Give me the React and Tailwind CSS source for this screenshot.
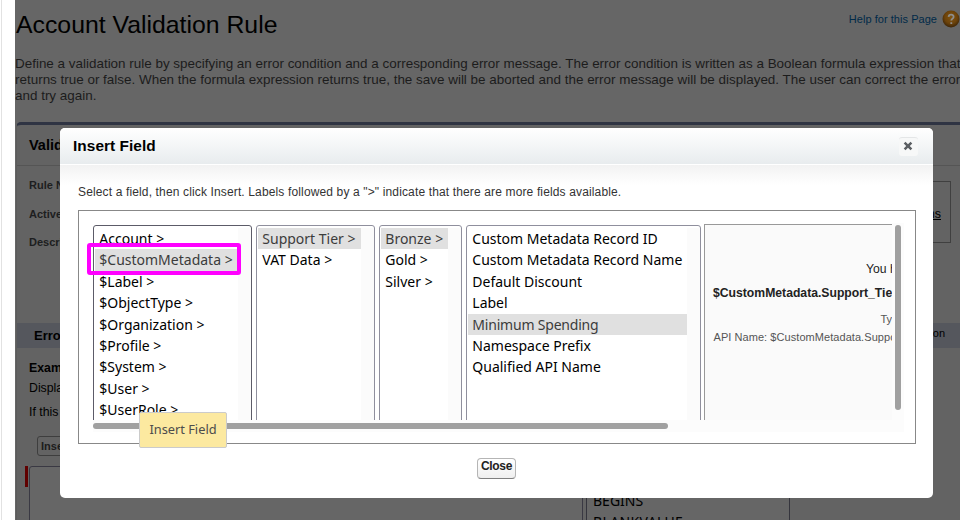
const cx = (...parts) => parts.filter(Boolean).join(' ')

const globals = ['Account >', '$CustomMetadata >', '$Label >', '$ObjectType >', '$Organization >', '$Profile >', '$System >', '$User >', '$UserRole >']
const types = ['Support Tier >', 'VAT Data >']
const records = ['Bronze >', 'Gold >', 'Silver >']
const fields = ['Custom Metadata Record ID', 'Custom Metadata Record Name', 'Default Discount', 'Label', 'Minimum Spending', 'Namespace Prefix', 'Qualified API Name']

function ListBox({ items, selected, className, gutter, border = 'border-[#8f8f9d]' }) {
  return (
    <div className={cx('flex h-[240px] shrink-0 rounded-[3px] border bg-white pt-[2px] pl-px', border, className)}>
      <ul className="grow font-['Noto_Sans',sans-serif] text-[14px] text-black">
        {items.map((item) => (
          <li
            key={item}
            className={cx('h-[21.4px] pl-[4.8px] leading-[21px] whitespace-nowrap', item === selected && 'bg-[#e0e0e0] text-[#3c3c3c]', item === 'Minimum Spending' && 'tracking-[-0.2px]')}
          >
            {item}
          </li>
        ))}
      </ul>
      <div className={cx('shrink-0 bg-[#fbfbfb]', gutter)} />
    </div>
  )
}

function RulePage() {
  return (
    <div className="ml-[15px] h-[520px] w-[945px] overflow-hidden bg-[#666666]">
      <div className="flex h-[56px] justify-between">
        <h1 className="pt-[10px] pl-[1px] text-[24.8px] leading-[30px] text-black">Account Validation Rule</h1>
        <div className="flex h-[37px] items-center gap-[5px] pt-px">
          <span className="text-[11px] tracking-[0.04px] whitespace-nowrap text-[#012a49]">Help for this Page</span>
          <svg className="size-[18px]" viewBox="0 0 18 18">
            <defs>
              <radialGradient id="help" cx="0.5" cy="0.4" r="0.6">
                <stop offset="0" stopColor="#7e5412" />
                <stop offset="0.6" stopColor="#6d430a" />
                <stop offset="1" stopColor="#3c2508" />
              </radialGradient>
            </defs>
            <circle cx="9" cy="9" r="8.5" fill="url(#help)" />
            <path d="M6.6 6.9c.2-3 5.2-2.9 5 .1-.1 1.6-2.3 1.7-2.3 3.6M9.3 12.3v1.7" fill="none" stroke="#8d8d8d" strokeWidth="1.8" />
          </svg>
        </div>
      </div>
      <p className="h-[66px] text-[13.45px] leading-4 whitespace-nowrap text-[#1c1c1c]">
        Define a validation rule by specifying an error condition and a corresponding error message. The error condition is written as a Boolean formula expression that
        <br />
        returns true or false. When the formula expression returns true, the save will be aborted and the error message will be displayed. The user can correct the error
        <br />
        and try again.
      </p>
      <div className="ml-px h-[500px] w-[960px] rounded-tl-[5px] border-t-[3px] border-l border-t-[#2f3443] border-l-[#5c5c5c] bg-[#636363]">
        <div className="h-[41px] border-b border-[#555555] pt-[10px] pl-3 text-[14.5px] leading-[20px] font-bold text-black">Validation</div>
        <div className="flex h-[157px] justify-between">
          <div className="pt-[9px] pl-3 text-[11px] font-bold text-[#1d1e20]">
            <div className="h-[29px] leading-[20px]">Rule Name</div>
            <div className="h-[28px] leading-[20px]">Active</div>
            <div className="leading-[20px]">Description</div>
          </div>
          <div className="mt-[15px] mr-[25px] flex h-[62px] w-[200px] justify-end border border-[#404040] pt-[22px] pr-[9px] text-[12.5px] leading-[20px] text-black underline">
            Functions
          </div>
        </div>
        <div className="flex h-[25px] items-center justify-between bg-[#55575d] pr-[31px] pl-[17px] text-black">
          <span className="text-[13px] font-bold">Error</span>
          <span className="pb-[4px] text-[11px]">Information</span>
        </div>
        <div className="pt-[10px] pl-3 text-[12.3px] leading-[20px] text-black">
          <div className="h-[20px] font-bold">Example:</div>
          <div className="h-[24px]">Display</div>
          <div className="h-[34px]">If this</div>
        </div>
        <div className="ml-[20px] h-[20px] w-[80px] rounded-[3px] border border-[#3e3e3e] pl-[3px] text-[11px] leading-[19px] font-bold text-[#1c1c1c]">Insert</div>
        <div className="mt-[10px] ml-[8px] flex h-[80px]">
          <div className="h-[21px] w-[3px] bg-[#600000]" />
          <div className="ml-px w-[554px] rounded-[3px] border border-[#3a3943] bg-[#666666]" />
          <div className="ml-[3px] w-[204px] border border-[#35353d] bg-[#666666] pt-[23px] pl-[6px] font-['Noto_Sans',sans-serif] text-[14px] leading-[21px] text-black">
            <div>BEGINS</div>
            <div className="tracking-[0.35px]">BLANKVALUE</div>
          </div>
        </div>
      </div>
    </div>
  )
}

function FieldDialog() {
  return (
    <section className="absolute top-[128px] left-[60px] h-[370px] w-[873px] overflow-hidden rounded-[5px] bg-white">
      <header className="flex h-[36px] items-center justify-between bg-linear-to-b from-white to-[#e8ecee] pr-[15px] pl-[13px]">
        <h2 className="text-[15.4px] leading-[20px] font-bold tracking-[0.05px] text-black">Insert Field</h2>
        <button className="flex size-[19px] items-center justify-center rounded-[3px] border-t border-[#e4e6e7] bg-[#f7f8f8] pr-px pb-px">
          <svg className="size-[10px]" viewBox="0 0 10 10">
            <path d="M1.6 1.6l6.8 6.8M8.4 1.6L1.6 8.4" stroke="#5c6064" strokeWidth="2.5" />
          </svg>
        </button>
      </header>
      <div className="mt-px h-[20px] bg-linear-to-b from-[#f2f2f2] to-white" />
      <div className="flex flex-col items-center">
        <p className="h-[25px] w-[837px] text-[12px] leading-[15px] tracking-[0.14px] whitespace-nowrap text-[#333333]">
          Select a field, then click Insert. Labels followed by a "&gt;" indicate that there are more fields available.
        </p>
        <div className="h-[234px] w-[838px] border border-[#888888] pt-[12px] pl-[14px]">
          <div className="flex h-[197px] w-[811px]">
            <div className="flex h-[197px] w-[799px] items-start gap-1 overflow-hidden pt-[2px]">
              <ListBox items={globals} selected="$CustomMetadata >" className="w-[159px]" gutter="w-[13px]" border="border-[#5c5b68]" />
              <ListBox items={types} selected="Support Tier >" className="w-[119px]" gutter="w-[13px]" />
              <ListBox items={records} selected="Bronze >" className="w-[83px]" gutter="w-[13px]" />
              <ListBox items={fields} selected="Minimum Spending" className="w-[235px]" gutter="w-[13px]" />
              <div className="-mt-px -ml-px flex h-[240px] w-[310px] shrink-0 flex-col items-center border border-[#999999] bg-[#fafafa] pt-[34px] text-center whitespace-nowrap">
                <div className="h-[25px] self-start pl-[161.5px] text-[12.2px] leading-[20px] text-[#222222]">You have selected:</div>
                <div className="h-[27px] self-start pl-[8.5px] text-[12.2px] leading-[18px] font-bold text-[#222222]">$CustomMetadata.Support_Tier__mdt</div>
                <div className="h-[18px] self-start pl-[176px] text-[11px] leading-[16px] text-[#555555]">Type: Currency</div>
                <div className="self-start pl-[9px] text-[11px] leading-[16px] tracking-[0.06px] text-[#555555]">API Name: $CustomMetadata.Support_Tier__mdt</div>
              </div>
            </div>
            <div className="w-[12px] bg-[#fcfcfc] pt-[2px] pl-[3px]">
              <div className="h-[185px] w-[6px] rounded-full bg-[#a0a0a0]" />
            </div>
          </div>
          <div className="h-[12px] w-[811px] bg-[#fcfcfc] pt-[3px]">
            <div className="h-[6px] w-[575px] rounded-full bg-[#a0a0a0]" />
          </div>
        </div>
        <button className="mt-[14px] h-[21px] w-[39px] rounded-[4px] border border-[#b5b5b5] border-b-[#7f7f7f] bg-linear-to-b from-white to-[#efefef] pb-[4px] text-[12px] leading-[15px] font-bold tracking-[-0.3px] text-[#222222]">
          Close
        </button>
      </div>
    </section>
  )
}

export default function App() {
  return (
    <main className="relative h-[520px] w-[960px] overflow-hidden bg-white font-['Liberation_Sans',Arial,sans-serif]">
      <div className="flex">
        <div className="-mr-[2px] ml-px h-[520px] w-px shrink-0 bg-[#e2e2e2]" />
        <RulePage />
      </div>
      <FieldDialog />
      <div className="absolute top-[243px] left-[87px] h-[32px] w-[154px] rounded-[3px] border-[4px] border-[#ff00ff]" />
      <div className="absolute top-[412px] left-[139px] flex h-[36px] w-[88px] items-center justify-center rounded-[2px] border border-[#cbcbcb] bg-[#fce9a0] font-['Noto_Sans',sans-serif] text-[12.8px] text-[#4c4c4c]">
        Insert Field
      </div>
    </main>
  )
}
